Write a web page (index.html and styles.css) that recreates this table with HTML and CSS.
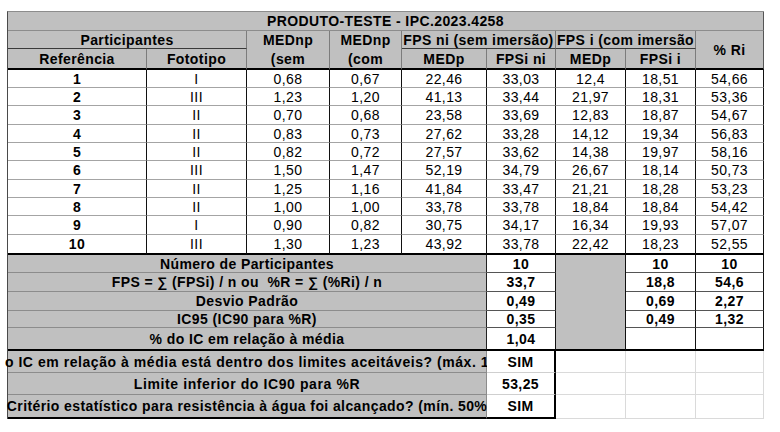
FILE: index.html
```html
<!DOCTYPE html>
<html lang="pt-BR">
<head>
<meta charset="utf-8">
<title>PRODUTO-TESTE - IPC.2023.4258</title>
<link rel="stylesheet" href="styles.css">
</head>
<body>
<div class="sheet">
  <div class="c title">PRODUTO-TESTE - IPC.2023.4258</div>

  <div class="c h span2 grp">Participantes</div>
  <div class="c h rows2 thick two"><span>MEDnp</span><span>(sem</span></div>
  <div class="c h rows2 thick two"><span>MEDnp</span><span>(com</span></div>
  <div class="c h span2 grp">FPS ni (sem imersão)</div>
  <div class="c h span2 grp">FPS i (com imersão</div>
  <div class="c h rows2 thick edge">% Ri</div>

  <div class="c h thick">Referência</div>
  <div class="c h thick">Fototipo</div>
  <div class="c h thick">MEDp</div>
  <div class="c h thick">FPSi ni</div>
  <div class="c h thick">MEDp</div>
  <div class="c h thick">FPSi i</div>

  <div class="c d b">1</div><div class="c d">I</div><div class="c d">0,68</div><div class="c d">0,67</div><div class="c d">22,46</div><div class="c d">33,03</div><div class="c d">12,4</div><div class="c d">18,51</div><div class="c d">54,66</div>
  <div class="c d b">2</div><div class="c d">III</div><div class="c d">1,23</div><div class="c d">1,20</div><div class="c d">41,13</div><div class="c d">33,44</div><div class="c d">21,97</div><div class="c d">18,31</div><div class="c d">53,36</div>
  <div class="c d b">3</div><div class="c d">II</div><div class="c d">0,70</div><div class="c d">0,68</div><div class="c d">23,58</div><div class="c d">33,69</div><div class="c d">12,83</div><div class="c d">18,87</div><div class="c d">54,67</div>
  <div class="c d b">4</div><div class="c d">II</div><div class="c d">0,83</div><div class="c d">0,73</div><div class="c d">27,62</div><div class="c d">33,28</div><div class="c d">14,12</div><div class="c d">19,34</div><div class="c d">56,83</div>
  <div class="c d b">5</div><div class="c d">II</div><div class="c d">0,82</div><div class="c d">0,72</div><div class="c d">27,57</div><div class="c d">33,62</div><div class="c d">14,38</div><div class="c d">19,97</div><div class="c d">58,16</div>
  <div class="c d b">6</div><div class="c d">III</div><div class="c d">1,50</div><div class="c d">1,47</div><div class="c d">52,19</div><div class="c d">34,79</div><div class="c d">26,67</div><div class="c d">18,14</div><div class="c d">50,73</div>
  <div class="c d b">7</div><div class="c d">II</div><div class="c d">1,25</div><div class="c d">1,16</div><div class="c d">41,84</div><div class="c d">33,47</div><div class="c d">21,21</div><div class="c d">18,28</div><div class="c d">53,23</div>
  <div class="c d b">8</div><div class="c d">II</div><div class="c d">1,00</div><div class="c d">1,00</div><div class="c d">33,78</div><div class="c d">33,78</div><div class="c d">18,84</div><div class="c d">18,84</div><div class="c d">54,42</div>
  <div class="c d b">9</div><div class="c d">I</div><div class="c d">0,90</div><div class="c d">0,82</div><div class="c d">30,75</div><div class="c d">34,17</div><div class="c d">16,34</div><div class="c d">19,93</div><div class="c d">57,07</div>
  <div class="c d b last">10</div><div class="c d last">III</div><div class="c d last">1,30</div><div class="c d last">1,23</div><div class="c d last">43,92</div><div class="c d last">33,78</div><div class="c d last">22,42</div><div class="c d last">18,23</div><div class="c d last">52,55</div>

  <div class="c lab">Número de Participantes</div><div class="c val">10</div><div class="c gap"></div><div class="c val">10</div><div class="c val">10</div>
  <div class="c lab">FPS = ∑ (FPSi) / n ou&nbsp; %R = ∑ (%Ri) / n</div><div class="c val">33,7</div><div class="c val">18,8</div><div class="c val">54,6</div>
  <div class="c lab">Desvio Padrão</div><div class="c val">0,49</div><div class="c val">0,69</div><div class="c val">2,27</div>
  <div class="c lab">IC95 (IC90 para %R)</div><div class="c val">0,35</div><div class="c val">0,49</div><div class="c val">1,32</div>
  <div class="c lab last">% do IC em relação à média</div><div class="c val last">1,04</div><div class="c val last"></div><div class="c val last"></div>

  <div class="c foot f1">o IC em relação à média está dentro dos limites aceitáveis? (máx. 1</div><div class="c fval">SIM</div><div class="c blank"></div><div class="c blank"></div><div class="c blank"></div>
  <div class="c foot f2">Limite inferior do IC90 para %R</div><div class="c fval">53,25</div><div class="c blank"></div><div class="c blank"></div><div class="c blank"></div>
  <div class="c foot f3 last">Critério estatístico para resistência à água foi alcançado? (mín. 50%</div><div class="c fval last">SIM</div><div class="c blank"></div><div class="c blank"></div><div class="c blank"></div>
</div>
</body>
</html>
```

FILE: styles.css
```css
* { box-sizing: border-box; }

html, body {
  margin: 0;
  padding: 0;
  background: #ffffff;
}

body {
  font-family: "Liberation Sans", Arial, sans-serif;
  font-size: 14px;
  letter-spacing: 0.4px;
  color: #000;
}

.sheet {
  display: grid;
  grid-template-columns: 139px 100px 83px 72px 85px 69px 70px 70px 68px;
  grid-template-rows: 19px 18px 21px 18px 18px 19px 18px 18px 19px 18px 18px 19px 20px 18px 19px 19px 17px 23px 22px 22px 24px;
  margin: 11px 0 0 7px;
  width: 757px;
  border-top: 1px solid #8c8c8c;
  border-left: 1px solid #4a4a4a;
}

.c {
  display: flex;
  align-items: center;
  justify-content: center;
  white-space: nowrap;
  line-height: 1;
  overflow: hidden;
}

.title {
  grid-column: 1 / -1;
  background: #c0c0c0;
  font-weight: bold;
  border-right: 1px solid #555;
  border-bottom: 1px solid #8c8c8c;
}

.h {
  background: #c0c0c0;
  font-weight: bold;
  border-right: 1px solid #7c7c7c;
  border-bottom: 1px solid #8c8c8c;
}

.span2 { grid-column: span 2; }
.rows2 { grid-row: span 2; }

.grp { border-bottom-color: #3a3a3a; }

.thick { border-bottom: 2px solid #000; }
.edge { border-right-color: #555; }

.two {
  flex-direction: column;
  justify-content: flex-start;
}

.two span {
  display: flex;
  align-items: center;
  justify-content: center;
  width: 100%;
  height: 18px;
}

.two span + span { height: 19px; }

.d {
  background: #fff;
  border-right: 1px solid #111;
  border-bottom: 1px solid #a4a4a4;
}

.b { font-weight: bold; }

.d.last { border-bottom: 2px solid #000; }

.lab {
  grid-column: span 5;
  background: #c0c0c0;
  font-weight: bold;
  border-right: 1px solid #222;
  border-bottom: 1px solid #8c8c8c;
}

.val {
  background: #fff;
  font-weight: bold;
  border-right: 1px solid #111;
  border-bottom: 1px solid #555;
}

.gap {
  grid-row: span 5;
  background: #c0c0c0;
  border-right: 1px solid #111;
  border-bottom: 2px solid #000;
}

.lab.last, .val.last { border-bottom: 2px solid #000; }

.foot {
  grid-column: span 5;
  background: #c0c0c0;
  font-weight: bold;
  border-right: 1px solid #8c8c8c;
  border-bottom: 1px solid #8c8c8c;
  overflow: visible;
  clip-path: inset(0 0 0 -12px);
}

.f1 { letter-spacing: 0.55px; }
.f2 { letter-spacing: 0.6px; }
.f3 { letter-spacing: 0.4px; }

.fval {
  background: #fff;
  font-weight: bold;
  border-right: 2px solid #000;
  border-bottom: 1px solid #cfcfcf;
}

.foot.last, .fval.last { border-bottom: 2px solid #000; }

.blank {
  background: #fff;
  border-right: 1px solid #dadada;
  border-bottom: 1px solid #dadada;
}
```
